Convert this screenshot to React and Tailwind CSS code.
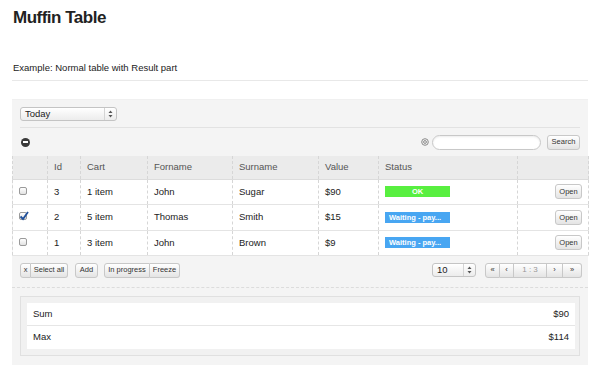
// App.jsx
import React from "react";

const rows = [
  { id: 3, cart: "1 item", forname: "John", surname: "Sugar", value: "$90", status: "OK", checked: false },
  { id: 2, cart: "5 item", forname: "Thomas", surname: "Smith", value: "$15", status: "Waiting - pay...", checked: true },
  { id: 1, cart: "3 item", forname: "John", surname: "Brown", value: "$9", status: "Waiting - pay...", checked: false },
];

const Arrows = () => (
  <svg width="5" height="8" viewBox="0 0 5 8" className="text-[#555]">
    <path d="M2.5 0.5 L4.5 3 L0.5 3 Z" fill="currentColor" />
    <path d="M2.5 7.5 L4.5 5 L0.5 5 Z" fill="currentColor" />
  </svg>
);

const SmallSelect = ({ label, width }) => (
  <div
    className={`flex items-center h-[14px] rounded-[3px] border border-[#c4c4c4] bg-gradient-to-b from-white to-[#ececec] shadow-[inset_0_1px_0_#fff] ${width}`}
  >
    <span className="flex-1 pl-[4px] text-[9.5px] leading-none text-[#222]">{label}</span>
    <span className="flex items-center justify-center w-[12px] h-full border-l border-[#d4d4d4]">
      <Arrows />
    </span>
  </div>
);

const Btn = ({ children, className = "" }) => (
  <span
    className={`inline-flex items-center justify-center h-[15px] border border-[#c8c8c8] bg-gradient-to-b from-white to-[#e4e4e4] text-[7.5px] leading-none text-[#333] ${className}`}
  >
    {children}
  </span>
);

const Checkbox = ({ checked }) => (
  <span className="relative inline-block w-[8px] h-[8px] rounded-[2px] border border-[#9a9a9a] bg-gradient-to-b from-white to-[#e2e2e2]">
    {checked && (
      <svg width="10" height="10" viewBox="0 0 10 10" className="absolute left-[-1px] top-[-2px]">
        <path d="M1.5 5.5 L4 8 L9 1" fill="none" stroke="#1f4f9a" strokeWidth="1.8" />
      </svg>
    )}
  </span>
);

const Badge = ({ status }) => {
  const ok = status === "OK";
  return (
    <span
      className={`flex items-center h-[11px] w-[65px] text-[7.5px] font-bold leading-none text-white ${
        ok ? "bg-[#58ef40] justify-center" : "bg-[#48a6f2] pl-[4px]"
      }`}
    >
      {status}
    </span>
  );
};

const App = () => {
  const cell = "border-l border-dashed border-[#d6d6d6] px-[6px] align-middle";
  return (
    <div className="w-[600px] h-[375px] bg-white px-[12px] pt-[8px] font-['Liberation_Sans',Arial,sans-serif] text-[#333] overflow-hidden">
      <h1 className="pl-[1px] text-[17px] leading-[20px] font-bold tracking-[-0.5px] text-[#222]">
        Muffin Table
      </h1>

      <div className="mt-[34px] pl-[1px] pb-[6px] border-b border-[#e8e8e8] text-[9.5px] leading-[12px] text-[#222]">
        Example: Normal table with Result part
      </div>

      <div className="mt-[18px] bg-[#f4f4f4] border-t border-[#f0f0f0]">
        <div className="px-[8px] pt-[7px]">
          <div className="pb-[6px] border-b border-[#e2e2e2]">
            <SmallSelect label="Today" width="w-[97px]" />
          </div>
          <div className="flex items-center h-[28px]">
            <span className="flex items-center justify-center w-[9px] h-[9px] ml-[1px] rounded-full bg-[#3a3a3a]">
              <span className="w-[5px] h-[2px] bg-white" />
            </span>
            <div className="flex-1" />
            <svg width="8" height="8" viewBox="0 0 8 8" className="mr-[3px]">
              <circle cx="4" cy="4" r="3.3" fill="none" stroke="#8a8a8a" strokeWidth="1" />
              <circle cx="4" cy="4" r="1.4" fill="none" stroke="#8a8a8a" strokeWidth="1" />
            </svg>
            <span className="w-[109px] h-[15px] rounded-full border border-[#c8c8c8] bg-white shadow-[inset_0_1px_2px_rgba(0,0,0,0.08)]" />
            <Btn className="ml-[6px] w-[33px] rounded-[3px]">Search</Btn>
          </div>
        </div>

        <table className="w-full border-collapse table-fixed border-r border-dashed border-[#d6d6d6] text-[9.5px]">
          <colgroup>
            <col className="w-[35px]" />
            <col className="w-[33px]" />
            <col className="w-[67px]" />
            <col className="w-[85px]" />
            <col className="w-[86px]" />
            <col className="w-[60px]" />
            <col className="w-[139px]" />
            <col className="w-[71px]" />
          </colgroup>
          <thead>
            <tr className="h-[23px] bg-[#ebebeb] border-b border-[#dcdcdc] text-left text-[#555]">
              <th className={`${cell} font-normal`} />
              <th className={`${cell} font-normal`}>Id</th>
              <th className={`${cell} font-normal`}>Cart</th>
              <th className={`${cell} font-normal`}>Forname</th>
              <th className={`${cell} font-normal`}>Surname</th>
              <th className={`${cell} font-normal`}>Value</th>
              <th className={`${cell} font-normal`}>Status</th>
              <th className={`${cell} font-normal`} />
            </tr>
          </thead>
          <tbody className="bg-white text-[#222]">
            {rows.map((r) => (
              <tr key={r.id} className="h-[25.5px] border-b border-[#e4e4e4]">
                <td className={cell}>
                  <Checkbox checked={r.checked} />
                </td>
                <td className={cell}>{r.id}</td>
                <td className={cell}>{r.cart}</td>
                <td className={cell}>{r.forname}</td>
                <td className={cell}>{r.surname}</td>
                <td className={cell}>{r.value}</td>
                <td className={cell}>
                  <Badge status={r.status} />
                </td>
                <td className={`${cell} text-right`}>
                  <Btn className="w-[27px] rounded-[3px]">Open</Btn>
                </td>
              </tr>
            ))}
          </tbody>
        </table>

        <div className="flex items-center h-[32px] px-[8px] pb-[3px] border-b border-dashed border-[#dcdcdc]">
          <Btn className="rounded-l-[3px] w-[11px]">x</Btn>
          <Btn className="rounded-r-[3px] border-l-0 w-[37px]">Select all</Btn>
          <Btn className="ml-[7px] rounded-[3px] w-[23px]">Add</Btn>
          <Btn className="ml-[6px] rounded-l-[3px] w-[46px]">In progress</Btn>
          <Btn className="rounded-r-[3px] border-l-0 w-[30px]">Freeze</Btn>
          <div className="flex-1" />
          <SmallSelect label="10" width="w-[44px]" />
          <div className="flex ml-[9px] mr-[-2px]">
            <Btn className="w-[15px] rounded-l-[3px] text-[6px]">«</Btn>
            <Btn className="w-[14px] border-l-0 text-[6px]">‹</Btn>
            <Btn className="w-[33px] border-l-0 text-[8px] text-[#999]">1 : 3</Btn>
            <Btn className="w-[16px] border-l-0 text-[6px]">›</Btn>
            <Btn className="w-[19px] rounded-r-[3px] border-l-0 text-[6px]">»</Btn>
          </div>
        </div>

        <div className="px-[8px] pt-[8px] pb-[9px]">
          <div className="w-[560px] border border-[#e0e0e0] bg-[#f1f1f1] pl-[6px] pr-[4px] py-[6px]">
            <div className="bg-white text-[9.5px] text-[#222]">
              <div className="flex items-center justify-between h-[23px] px-[6px] border-b border-[#e6e6e6]">
                <span>Sum</span>
                <span>$90</span>
              </div>
              <div className="flex items-center justify-between h-[23px] px-[6px]">
                <span>Max</span>
                <span>$114</span>
              </div>
            </div>
          </div>
        </div>
      </div>
    </div>
  );
};

export default App;
